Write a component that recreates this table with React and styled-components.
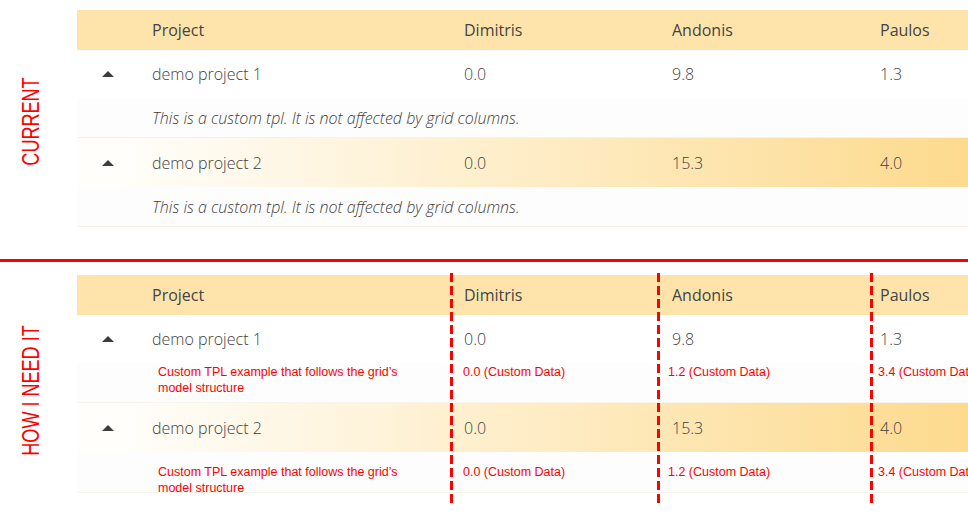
import React from 'react'
import styled, { createGlobalStyle } from 'styled-components'

const GlobalStyle = createGlobalStyle`
  html, body {
    margin: 0;
    padding: 0;
    background: #fff;
    overflow: hidden;
  }
  body {
    font-family: "Open Sans", "Liberation Sans", sans-serif;
  }
`

const Page = styled.div`
  width: 968px;
  padding-bottom: 20px;
`

const Section = styled.div`
  display: flex;
  align-items: stretch;
  padding-top: ${(p) => p.$top || 0}px;
`

const Side = styled.div`
  width: 77px;
  flex: 0 0 77px;
  display: flex;
  align-items: center;
  justify-content: center;
  padding-top: ${(p) => p.$shift || 0}px;
  padding-right: 14px;
  box-sizing: border-box;
`

const SideLabel = styled.span`
  display: block;
  white-space: nowrap;
  font-family: "Liberation Sans", Arial, sans-serif;
  font-size: 23px;
  color: #ff0000;
  transform: rotate(-90deg) scaleX(0.785);
`

const Grid = styled.div`
  position: relative;
  flex: 0 0 auto;
  display: grid;
  grid-template-columns: 63px 312px 208px 208px 208px;
`

const HeadCell = styled.div`
  height: 40px;
  background: #fee4ab;
  display: flex;
  align-items: center;
  padding-left: ${(p) => p.$pad ?? 12}px;
  font-size: 16px;
  color: #444;
`

const Row = styled.div`
  grid-column: 1 / -1;
  display: grid;
  grid-template-columns: subgrid;
  height: ${(p) => p.$h || 48}px;
  background: ${(p) =>
    p.$hot ? 'linear-gradient(90deg, #fffefb 4%, #fdd98a 92%)' : '#fff'};
`

const Cell = styled.div`
  display: flex;
  align-items: center;
  padding-left: ${(p) => p.$pad ?? 12}px;
  font-size: 16px;
  font-weight: 300;
  color: #3f3f3f;
`

const Caret = styled.span`
  width: 0;
  height: 0;
  margin-left: 25px;
  border-left: 6.5px solid transparent;
  border-right: 6.5px solid transparent;
  border-bottom: 6px solid #3d3d3d;
`

const TplRow = styled.div`
  grid-column: 1 / -1;
  height: 40px;
  background: #fdfdfd;
  border-bottom: 1px solid #f6f2ea;
  box-sizing: border-box;
  display: flex;
  align-items: center;
  padding-left: 75px;
  font-size: 16px;
  font-style: italic;
  font-weight: 300;
  color: #3f3f3f;
`

const CustomRow = styled.div`
  grid-column: 1 / -1;
  display: grid;
  grid-template-columns: subgrid;
  height: ${(p) => p.$h || 40}px;
  padding-top: ${(p) => p.$top || 0}px;
  box-sizing: border-box;
  background: #fdfdfd;
  border-bottom: 1px solid #f7f4ec;
`

const CustomCell = styled.div`
  padding-left: ${(p) => p.$pad || 0}px;
  font-family: "Liberation Sans", Arial, sans-serif;
  font-size: 12.5px;
  line-height: 16px;
  color: #ff0000;
  white-space: ${(p) => (p.$wrap ? 'normal' : 'nowrap')};
  max-width: ${(p) => (p.$wrap ? '250px' : 'none')};
`

const Divider = styled.div`
  height: 3px;
  background: #ff0000;
  margin-top: 32px;
`

const Dash = styled.div`
  position: absolute;
  top: -2px;
  height: 232px;
  width: 3px;
  left: ${(p) => p.$x}px;
  background: repeating-linear-gradient(
    to bottom,
    #ff0000 0 9px,
    transparent 9px 13px
  );
`

const names = ['Dimitris', 'Andonis', 'Paulos']

const projects = [
  { name: 'demo project 1', values: ['0.0', '9.8', '1.3'] },
  { name: 'demo project 2', values: ['0.0', '15.3', '4.0'], hot: true },
]

const custom = ['0.0 (Custom Data)', '1.2 (Custom Data)', '3.4 (Custom Data)']

const Header = () => (
  <>
    <HeadCell />
    <HeadCell>Project</HeadCell>
    {names.map((n) => (
      <HeadCell key={n}>{n}</HeadCell>
    ))}
  </>
)

const DataRow = ({ project, h }) => (
  <Row $hot={project.hot} $h={h}>
    <Cell $pad={0}>
      <Caret />
    </Cell>
    <Cell>{project.name}</Cell>
    {project.values.map((v, i) => (
      <Cell key={i}>{v}</Cell>
    ))}
  </Row>
)

const App = () => {
  return (
    <Page>
      <GlobalStyle />
      <Section $top={10}>
        <Side $shift={5}>
          <SideLabel>CURRENT</SideLabel>
        </Side>
        <Grid>
          <Header />
          {projects.map((p, i) => (
            <React.Fragment key={p.name}>
              <DataRow project={p} h={i === 0 ? 48 : 49} />
              <TplRow>This is a custom tpl. It is not affected by grid columns.</TplRow>
            </React.Fragment>
          ))}
        </Grid>
      </Section>

      <Divider />

      <Section $top={13}>
        <Side $shift={12}>
          <SideLabel>HOW I NEED IT</SideLabel>
        </Side>
        <Grid>
          <Header />
          {projects.map((p, i) => (
            <React.Fragment key={p.name}>
              <DataRow project={p} h={i === 0 ? 48 : 49} />
              <CustomRow $top={i === 0 ? 1 : 12} $h={i === 0 ? 40 : 41}>
                <div />
                <CustomCell $pad={18} $wrap>
                  Custom TPL example that follows the grid’s model structure
                </CustomCell>
                <CustomCell $pad={11}>{custom[0]}</CustomCell>
                <CustomCell $pad={8}>{custom[1]}</CustomCell>
                <CustomCell $pad={10}>{custom[2]}</CustomCell>
              </CustomRow>
            </React.Fragment>
          ))}
          <Dash $x={373} />
          <Dash $x={580} />
          <Dash $x={793} />
        </Grid>
      </Section>
    </Page>
  )
}

export default App
